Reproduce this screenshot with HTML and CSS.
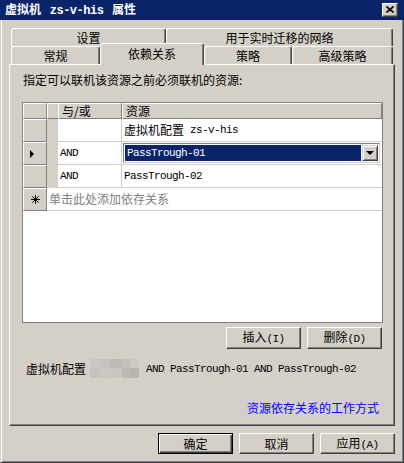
FILE: index.html
```html
<!DOCTYPE html>
<html lang="zh-CN">
<head>
    <meta charset="UTF-8">
    <title>虚拟机 zs-v-his 属性</title>
    <link rel="stylesheet" href="styles.css">
</head>
<body>
    <div class="titlebar">
        <span class="title">虚拟机 <span class="mono">zs-v-his</span> 属性</span>
        <div class="close-btn">
            <svg width="8" height="7" viewBox="0 0 8 7"><path d="M0.5 0.5 L7.5 6.5 M7.5 0.5 L0.5 6.5" stroke="#000" stroke-width="1.6"/></svg>
        </div>
    </div>

    <div class="frame">
        <!-- Tabs -->
        <div class="tabs">
            <div class="tab-row">
                <div class="tab w-settings">设置</div>
                <div class="tab w-net">用于实时迁移的网络</div>
            </div>
            <div class="tab-row front">
                <div class="tab w-general">常规</div>
                <div class="tab active w-deps">依赖关系</div>
                <div class="tab w-policy">策略</div>
                <div class="tab w-adv">高级策略</div>
            </div>
        </div>

        <div class="panel">
            <p class="intro">指定可以联机该资源之前必须联机的资源:</p>

            <!-- Dependency grid -->
            <div class="grid">
                <div class="grid-row grid-head">
                    <div class="rh"></div>
                    <div class="strip"></div>
                    <div class="cell c-op">与/或</div>
                    <div class="cell c-res">资源</div>
                </div>
                <div class="grid-row">
                    <div class="rh"></div>
                    <div class="strip"></div>
                    <div class="cell c-op"></div>
                    <div class="cell c-res">虚拟机配置<span class="mono"> zs-v-his</span></div>
                </div>
                <div class="grid-row">
                    <div class="rh"><span class="arrow"></span></div>
                    <div class="strip"></div>
                    <div class="cell c-op"><span class="mono">AND</span></div>
                    <div class="cell c-res c-edit">
                        <div class="combo">
                            <div class="combo-sel"><span class="mono">PassTrough-01</span></div>
                            <div class="combo-btn"><span class="down"></span></div>
                        </div>
                    </div>
                </div>
                <div class="grid-row">
                    <div class="rh"></div>
                    <div class="strip"></div>
                    <div class="cell c-op"><span class="mono">AND</span></div>
                    <div class="cell c-res"><span class="mono">PassTrough-02</span></div>
                </div>
                <div class="grid-row new-row">
                    <div class="rh">
                        <svg width="9" height="9" viewBox="0 0 9 9"><path d="M4.5 0 V9 M0 4.5 H9 M1.3 1.3 L7.7 7.7 M7.7 1.3 L1.3 7.7" stroke="#000" stroke-width="1"/></svg>
                    </div>
                    <div class="cell c-new">单击此处添加依存关系</div>
                </div>
            </div>

            <div class="grid-buttons">
                <button class="btn">插入<span class="mono">(I)</span></button>
                <button class="btn">删除<span class="mono">(D)</span></button>
            </div>

            <div class="summary">
                <span>虚拟机配置</span>
                <div class="mosaic">
                    <i></i><i></i><i></i><i></i><i></i>
                    <i></i><i></i><i></i><i></i><i></i>
                </div>
                <span class="mono">AND PassTrough-01 AND PassTrough-02</span>
            </div>

            <div class="help"><a href="#">资源依存关系的工作方式</a></div>
        </div>

        <div class="dlg-buttons">
            <button class="btn default">确定</button>
            <button class="btn">取消</button>
            <button class="btn">应用<span class="mono">(A)</span></button>
        </div>
    </div>
</body>
</html>
```

FILE: styles.css
```css
/* Global */
* {
    box-sizing: border-box;
}

body {
    margin: 0;
    width: 404px;
    height: 463px;
    overflow: hidden;
    background: #d4d0c8;
    font-family: "Noto Sans CJK SC", sans-serif;
    font-size: 12px;
    line-height: 14px;
    color: #000;
}

.mono {
    font-family: "Liberation Mono", "Noto Sans CJK SC", monospace;
    font-size: 11px;
    letter-spacing: -0.6px;
}

/* Title bar */
.titlebar {
    height: 20px;
    background: #0a246a;
    color: #fff;
    display: flex;
    align-items: center;
    justify-content: space-between;
    padding: 0 6px 0 5px;
}

.title {
    font-weight: bold;
    white-space: pre;
}

.title .mono {
    font-size: 12px;
    letter-spacing: -0.5px;
    margin: 0 6px;
}

.close-btn {
    width: 16px;
    height: 14px;
    background: #d4d0c8;
    border: 1px solid;
    border-color: #fff #404040 #404040 #fff;
    box-shadow: inset -1px -1px #808080;
    display: flex;
    align-items: center;
    justify-content: center;
    padding-bottom: 1px;
}

/* Window frame */
.frame {
    height: 443px;
    border-left: 1px solid #d4d0c8;
    border-right: 1px solid #404040;
    border-bottom: 1px solid #404040;
    box-shadow: inset 1px 0 #fff, inset -1px -1px #808080;
    padding: 8px 8px 0 8px;
}

/* Tabs */
.tabs {
    margin-left: 2px;
}

.tab-row {
    display: flex;
    height: 18px;
}

.tab-row.front {
    align-items: flex-end;
}

.tab {
    height: 18px;
    background: #d4d0c8;
    border-top: 1px solid #fff;
    border-left: 1px solid #fff;
    border-right: 1px solid #404040;
    box-shadow: inset -1px 0 #808080;
    border-radius: 3px 3px 0 0;
    display: flex;
    align-items: center;
    justify-content: center;
    padding-top: 1px;
}

.tab.active {
    height: 22px;
    margin-bottom: -1px;
    position: relative;
    z-index: 1;
    padding-bottom: 2px;
}

.w-settings { width: 155px; }
.w-net { width: 227px; }
.w-general { width: 89px; }
.w-deps { width: 104px; }
.w-policy { width: 88px; }
.w-adv { width: 101px; }

/* Tab panel */
.panel {
    height: 362px;
    border: 1px solid;
    border-color: #fff #404040 #404040 #fff;
    box-shadow: inset -1px -1px #808080;
    padding-top: 8px;
}

.intro {
    margin: 0 0 15px 13px;
}

/* Grid */
.grid {
    width: 361px;
    height: 221px;
    margin-left: 12px;
    border: 1px solid #808080;
    background: #fff;
}

.grid-row {
    display: flex;
    height: 23px;
}

.grid-head {
    height: 16px;
    background: #d4d0c8;
}

.rh {
    width: 24px;
    background: #d4d0c8;
    border-top: 1px solid #fff;
    border-left: 1px solid #fff;
    border-right: 1px solid #808080;
    border-bottom: 1px solid #808080;
    display: flex;
    align-items: center;
    justify-content: center;
}

.strip {
    width: 11px;
    background: #d4d0c8;
}

.grid-head .strip {
    border-left: 1px solid #fff;
    border-bottom: 1px solid #808080;
    border-top: 1px solid #fff;
}

.cell {
    border-bottom: 1px solid #d4d0c8;
    display: flex;
    align-items: center;
    padding-left: 2px;
    white-space: pre;
}

.c-op {
    width: 64px;
    border-right: 1px solid #d4d0c8;
}

.c-res {
    flex: 1;
}

.grid-head .cell {
    border-top: 1px solid #fff;
    border-left: 1px solid #fff;
    border-right: 1px solid #808080;
    border-bottom: 1px solid #808080;
    padding-left: 3px;
}

.arrow {
    width: 0;
    height: 0;
    border-top: 4px solid transparent;
    border-bottom: 4px solid transparent;
    border-left: 4px solid #000;
    margin-right: 6px;
}

.new-row .cell {
    flex: 1;
    color: #808080;
}

/* Combo box in edited cell */
.c-edit {
    padding: 0 2px 1px 1px;
}

.combo {
    flex: 1;
    height: 20px;
    display: flex;
    border: 1px solid;
    border-color: #808080 #d4d0c8 #d4d0c8 #808080;
    background: #fff;
    padding: 1px;
}

.combo-sel {
    flex: 1;
    background: #0a246a;
    color: #fff;
    display: flex;
    align-items: center;
    padding-left: 2px;
    margin-right: 1px;
}

.combo-btn {
    width: 16px;
    background: #d4d0c8;
    border: 1px solid;
    border-color: #d4d0c8 #404040 #404040 #d4d0c8;
    box-shadow: inset 1px 1px #fff, inset -1px -1px #808080;
    display: flex;
    align-items: center;
    justify-content: center;
}

.down {
    width: 0;
    height: 0;
    border-left: 4px solid transparent;
    border-right: 4px solid transparent;
    border-top: 4px solid #000;
}

/* Buttons */
.btn {
    width: 75px;
    height: 21px;
    padding: 0;
    background: #d4d0c8;
    border: 1px solid;
    border-color: #fff #404040 #404040 #fff;
    box-shadow: inset -1px -1px #808080;
    font-family: "Noto Sans CJK SC", sans-serif;
    font-size: 12px;
    line-height: 14px;
    color: #000;
}

.btn.default {
    border: 1px solid #000;
    box-shadow: inset 1px 1px #fff, inset -1px -1px #404040, inset -2px -2px #808080;
}

.grid-buttons {
    width: 361px;
    margin: 4px 0 0 12px;
    display: flex;
    justify-content: flex-end;
    gap: 6px;
    padding-right: 1px;
}

.grid-buttons .btn {
    height: 22px;
}

/* Summary line */
.summary {
    margin: 10px 0 0 16px;
    height: 19px;
    display: flex;
    align-items: center;
    white-space: pre;
}

.mosaic {
    width: 49px;
    height: 19px;
    margin: 0 7px 0 4px;
    display: grid;
    grid-template-columns: 10px 10px 12px 8px 9px;
    grid-template-rows: 9px 10px;
}

.mosaic i:nth-child(1) { background: #cac7c2; }
.mosaic i:nth-child(2) { background: #c7c4bf; }
.mosaic i:nth-child(3) { background: #bebbb6; }
.mosaic i:nth-child(4) { background: #c4c1bc; }
.mosaic i:nth-child(5) { background: #cdcac5; }
.mosaic i:nth-child(6) { background: #c6c3be; }
.mosaic i:nth-child(7) { background: #cbc8c3; }
.mosaic i:nth-child(8) { background: #c9c6c1; }
.mosaic i:nth-child(9) { background: #bdbab5; }
.mosaic i:nth-child(10) { background: #b9b6b1; }

/* Help link */
.help {
    margin-top: 23px;
    text-align: right;
    padding-right: 15px;
}

.help a {
    color: #0000ff;
    text-decoration: none;
}

/* Dialog buttons */
.dlg-buttons {
    margin-top: 7px;
    display: flex;
    justify-content: flex-end;
    gap: 6px;
}
```
